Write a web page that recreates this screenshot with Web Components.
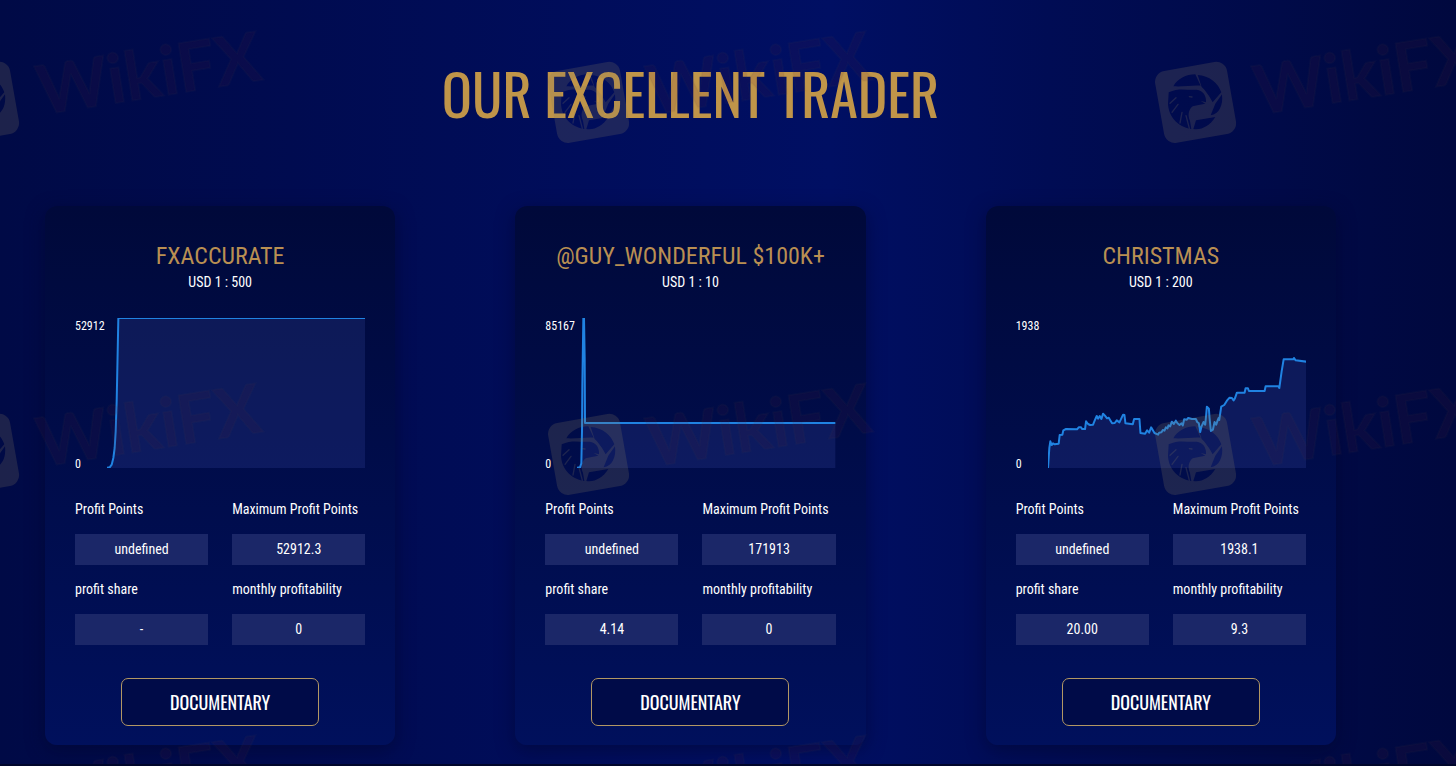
<!DOCTYPE html>
<html lang="en">
<head>
<meta charset="utf-8">
<title>Our Excellent Trader</title>
<style>
  html { background: #000a48; }
  body {
    margin: 0;
    color: #fff;
    font: 14px/20px "Roboto Condensed", "Liberation Sans Narrow", Roboto, sans-serif;
  }
</style>
</head>
<body>
<trader-section heading="OUR EXCELLENT TRADER">
  <trader-card name="FXACCURATE" leverage="USD 1 : 500" max="52912" chart="plateau">
    <stat-field label="Profit Points">undefined</stat-field>
    <stat-field label="Maximum Profit Points">52912.3</stat-field>
    <stat-field label="profit share">-</stat-field>
    <stat-field label="monthly profitability">0</stat-field>
  </trader-card>
  <trader-card name="@GUY_WONDERFUL $100K+" leverage="USD 1 : 10" max="85167" chart="spike">
    <stat-field label="Profit Points">undefined</stat-field>
    <stat-field label="Maximum Profit Points">171913</stat-field>
    <stat-field label="profit share">4.14</stat-field>
    <stat-field label="monthly profitability">0</stat-field>
  </trader-card>
  <trader-card name="CHRISTMAS" leverage="USD 1 : 200" max="1938" chart="growth">
    <stat-field label="Profit Points">undefined</stat-field>
    <stat-field label="Maximum Profit Points">1938.1</stat-field>
    <stat-field label="profit share">20.00</stat-field>
    <stat-field label="monthly profitability">9.3</stat-field>
  </trader-card>
</trader-section>

<script>
// Equity curves, drawn on a 774 x 450 plot.
const CHARTS = {
  plateau: "0,449 8,448 14,440 19,420 23,390 26,340 29,250 31,150 34,0 774,0",
  spike: "0,449 9,448 13,436 15,340 16,200 19,0 21,0 23,120 24,315 774,315",
  growth: "0,450 4,390 7,370 11,381 15,376 20,379 32,377 35,351 43,350 46,337 54,333 87,334 92,328 99,328 102,333 111,333 114,310 120,318 126,321 135,320 141,305 146,294 150,302 155,294 160,303 165,287 170,292 177,301 182,299 192,316 200,315 206,307 214,313 225,290 229,291 232,316 254,319 258,303 274,303 277,345 291,347 297,337 303,344 309,328 319,345 330,350 333,344 340,343 344,336 349,338 353,328 358,331 361,322 366,325 371,311 377,318 383,308 388,316 394,321 400,316 404,322 408,304 416,305 420,300 431,303 443,303 447,312 452,316 456,342 460,325 466,312 471,320 474,290 476,266 482,272 484,300 488,339 494,335 499,312 504,320 508,308 511,300 513,306 519,266 528,261 536,248 544,239 551,240 556,247 560,241 566,224 589,224 592,211 599,211 602,219 649,219 652,205 690,205 693,210 700,160 706,124 735,124 737,120 742,127 774,131"
};

const define = (tag, markup, fill = () => {}) => {
  const template = document.createElement("template");
  template.innerHTML = markup;
  customElements.define(tag, class extends HTMLElement {
    constructor() {
      super();
      this.attachShadow({ mode: "open" }).append(template.content.cloneNode(true));
    }
    connectedCallback() { fill(this, this.shadowRoot); }
  });
};

define("wiki-mark", `
  <style>
    :host { display: block; position: absolute; width: 320px; height: 140px; pointer-events: none; }
    svg { display: block; width: 100%; height: 100%; overflow: visible; }
    text { font: bold 68px Lato, sans-serif; fill: #5a1f38; fill-opacity: .11; stroke: #6b6048; stroke-opacity: .05; stroke-width: 2; }
    .tile { fill: #857a60; fill-opacity: .22; }
    .cut { stroke: #fff; stroke-width: 4; fill: none; stroke-linecap: round; }
  </style>
  <svg viewBox="0 0 320 140" aria-hidden="true">
    <mask id="eagle" maskUnits="userSpaceOnUse" x="-50" y="-50" width="100" height="100">
      <path fill="#fff" d="M-50-50h100v100h-100z"/>
      <g transform="scale(.333) translate(-135 -141)">
        <path d="M70 94C82 72 108 58 136 58L152 92C130 90 100 96 70 94Z"/>
        <path d="M143 60C178 62 205 84 214 112L188 142C180 125 165 105 155 96Z"/>
        <path d="M216 118C220 150 208 178 182 181L196 146Z"/>
        <path d="M196 186C180 212 155 226 130 222L138 196Z"/>
        <path d="M56 112C85 98 110 106 140 104C160 106 170 124 168 142L152 138L166 146L146 150L128 154C116 164 112 180 120 198L124 222C80 216 54 180 54 145Z"/>
        <path class="cut" d="M60 145L78 128M66 172L84 148M90 204L96 172M118 220L108 182M118 125L126 126"/>
      </g>
    </mask>
    <g transform="translate(40 90)">
      <g mask="url(#eagle)"><rect class="tile" x="-36" y="-36" width="73" height="73" rx="11" transform="rotate(-10)"/></g>
    </g>
    <text transform="translate(103 103) rotate(-9)">WikiFX</text>
  </svg>`);

define("trader-section", `
  <style>
    :host {
      display: block; position: relative; overflow: hidden; box-sizing: border-box; min-height: 100vh;
      background: linear-gradient(90deg, #000a46 0%, #000b50 20%, #000d5b 40%, #000f63 57%, #000c54 72%, #000a48 88%, #00083e 100%);
      border-bottom: 2px solid #00062c;
    }
    section { padding: 53px 120px 19px 45px; }
    h1 { margin: 0; color: #c09549; font: 400 56px/80px Oswald, "Roboto Condensed", "Liberation Sans Narrow", sans-serif; text-align: center; }
    .cards { display: grid; grid-template-columns: repeat(3, minmax(0, 1fr)); gap: 120px; margin-top: 73px; }
  </style>
  <section>
    <h1></h1>
    <div class="cards"><slot></slot></div>
  </section>
  <div id="marks"></div>`, (host, root) => {
    root.querySelector("h1").textContent = host.getAttribute("heading");
    for (const y of [12, 364, 716]) {
      for (const x of [-62, 548, 1155]) {
        const mark = document.createElement("wiki-mark");
        mark.style.left = x + "px";
        mark.style.top = y + "px";
        root.getElementById("marks").append(mark);
      }
    }
  });

define("equity-chart", `
  <style>
    :host { display: flex; height: 150px; font-size: 12px; line-height: 16px; }
    .scale { display: flex; flex-direction: column; justify-content: space-between; box-sizing: border-box; width: 32px; flex: none; padding-bottom: 4px; }
    .scale span:last-child { margin-bottom: -8px; }
    svg { flex: 1; min-width: 0; height: 150px; }
    polyline { fill: none; stroke: #2083e2; stroke-width: 2; vector-effect: non-scaling-stroke; stroke-linejoin: round; }
    polygon { fill: #5066c8; fill-opacity: .17; }
  </style>
  <div class="scale"><span id="max"></span><span>0</span></div>
  <svg viewBox="0 0 774 450" preserveAspectRatio="none" aria-hidden="true"><polygon/><polyline/></svg>`,
  (host, root) => {
    const points = CHARTS[host.getAttribute("chart")];
    root.getElementById("max").textContent = host.getAttribute("max");
    root.querySelector("polyline").setAttribute("points", points);
    root.querySelector("polygon").setAttribute("points", points + " 774,450 0,450");
  });

define("stat-field", `
  <style>
    :host { display: block; }
    dl, dd { margin: 0; }
    dt { line-height: 20px; }
    dd { margin-top: 15px; background: #1b2768; line-height: 31px; text-align: center; }
  </style>
  <dl><dt></dt><dd><slot></slot></dd></dl>`,
  (host, root) => { root.querySelector("dt").textContent = host.getAttribute("label"); });

define("trader-card", `
  <style>
    :host {
      display: block; box-sizing: border-box; padding: 35px 30px 19px; border-radius: 12px;
      background: linear-gradient(#00093a, #00105c);
      box-shadow: 0 5px 18px rgba(0, 5, 44, .5);
    }
    h2 { margin: 0; color: #b98f52; font-size: 24px; line-height: 30px; font-weight: 400; text-align: center; white-space: nowrap; }
    p { margin: 0 0 25px; line-height: 22px; text-align: center; }
    .stats { display: grid; grid-template-columns: 1fr 1fr; gap: 14px 24px; margin: 31px 0 33px; }
    button {
      display: block; width: 198px; height: 48px; margin: 0 auto; padding: 0;
      border: 1px solid #b29763; border-radius: 7px; background: #000b48; color: #fff;
      font: 400 18px/24px Oswald, "Roboto Condensed", "Liberation Sans Narrow", sans-serif;
    }
  </style>
  <h2></h2>
  <p></p>
  <div id="plot"></div>
  <div class="stats"><slot></slot></div>
  <button type="button">DOCUMENTARY</button>`,
  (host, root) => {
    root.querySelector("h2").textContent = host.getAttribute("name");
    root.querySelector("p").textContent = host.getAttribute("leverage");
    const chart = document.createElement("equity-chart");
    chart.setAttribute("chart", host.getAttribute("chart"));
    chart.setAttribute("max", host.getAttribute("max"));
    root.getElementById("plot").append(chart);
  });
</script>
</body>
</html>
